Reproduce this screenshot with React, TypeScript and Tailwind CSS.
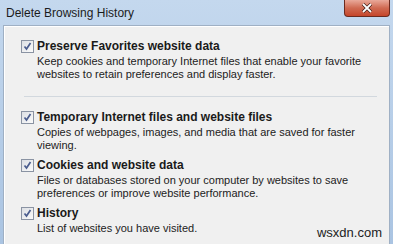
import type { ReactNode } from "react";

const items = [
  {
    title: "Preserve Favorites website data",
    text: [
      "Keep cookies and temporary Internet files that enable your favorite",
      "websites to retain preferences and display faster.",
    ],
  },
  {
    title: "Temporary Internet files and website files",
    text: ["Copies of webpages, images, and media that are saved for faster", "viewing."],
  },
  {
    title: "Cookies and website data",
    text: [
      "Files or databases stored on your computer by websites to save",
      "preferences or improve website performance.",
    ],
  },
  {
    title: "History",
    text: ["List of websites you have visited."],
  },
];

function CheckBox() {
  return (
    <span className="mt-[1px] grid h-[13px] w-[13px] shrink-0 place-items-center border border-[#8a93a3] bg-gradient-to-br from-[#dcdfe4] to-[#fbfbfb]">
      <svg viewBox="0 0 11 11" className="h-[11px] w-[11px]">
        <path
          d="M2.5 5.5 L4.5 8 L8.5 2"
          fill="none"
          stroke="#4b5d8e"
          strokeWidth="1.7"
        />
      </svg>
    </span>
  );
}

function Option({ title, text }: { title: string; text: string[] }) {
  return (
    <div className="flex gap-[3px]">
      <CheckBox />
      <div className="whitespace-nowrap">
        <div className="text-[12px] font-bold leading-[15px] text-[#1a1a1a]">{title}</div>
        <div className="mt-[1px] text-[11px] leading-[13px] text-[#222]">
          {text.map((line) => (
            <div key={line}>{line}</div>
          ))}
        </div>
      </div>
    </div>
  );
}

function Panel({ children }: { children: ReactNode }) {
  return (
    <div className="mx-[3px] h-[230px] border border-[#9fb0c4] bg-[#f0f0f0] shadow-[inset_1px_1px_0_#ffffff]">
      {children}
    </div>
  );
}

export default function App() {
  return (
    <div className="relative h-[244px] w-[393px] overflow-hidden bg-gradient-to-b from-[#c4d8ee] to-[#aac4e2] font-['Liberation_Sans',sans-serif]">
      <div className="flex h-[25px] items-center pl-[6px] text-[12px] text-[#1b1b1b]">
        Delete Browsing History
      </div>
      <button className="absolute right-[3px] top-0 grid h-[17px] w-[46px] place-items-center rounded-b-[4px] border border-t-0 border-[#6b2a1f] bg-gradient-to-b from-[#e9a99a] via-[#cf6a52] to-[#c5452a]">
        <svg viewBox="0 0 12 10" className="h-[10px] w-[12px]">
          <path d="M2 1 L10 9 M10 1 L2 9" stroke="#3d1a14" strokeWidth="3.2" />
          <path d="M2 1 L10 9 M10 1 L2 9" stroke="#ffffff" strokeWidth="1.8" />
        </svg>
      </button>
      <Panel>
        <div className="pl-[17px] pt-[13px]">
          <Option {...items[0]} />
          <div className="mb-[12px] mt-[15px] mr-[12px] ml-[3px] h-[2px] border-t border-[#d2d8de] border-b-white" />
          <div className="flex flex-col gap-[6px]">
            {items.slice(1).map((item) => (
              <Option key={item.title} {...item} />
            ))}
          </div>
        </div>
      </Panel>
      <span className="absolute bottom-[5px] right-[11px] font-['Liberation_Sans',sans-serif] text-[13px] leading-none text-[#222]">
        wsxdn.com
      </span>
    </div>
  );
}
